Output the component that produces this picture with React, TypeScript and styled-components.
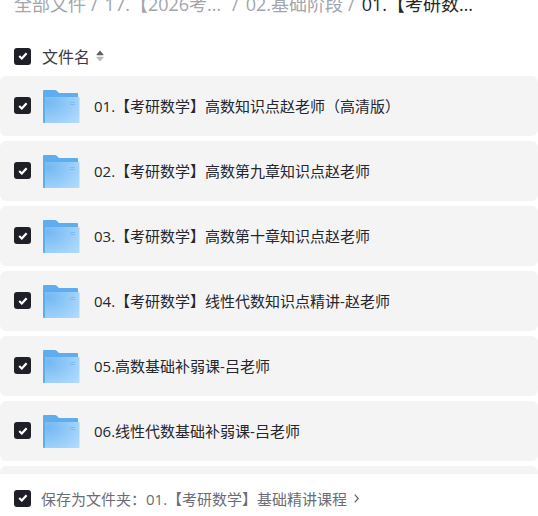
import styled, { createGlobalStyle } from 'styled-components'

const folders = [
  '01.【考研数学】高数知识点赵老师（高清版）',
  '02.【考研数学】高数第九章知识点赵老师',
  '03.【考研数学】高数第十章知识点赵老师',
  '04.【考研数学】线性代数知识点精讲-赵老师',
  '05.高数基础补弱课-吕老师',
  '06.线性代数基础补弱课-吕老师',
  '',
]

const crumbs = [
  { name: '全部文件', truncated: false },
  { name: '17.【2026考…', truncated: true },
  { name: '02.基础阶段', truncated: false },
]

const CheckBox = () => (
  <Check>
    <svg width="10" height="8" viewBox="0 0 10 8">
      <path d="M1.2 4 L3.8 6.5 L8.6 1.2" fill="none" stroke="#fff" strokeWidth="2.2" />
    </svg>
  </Check>
)

const FolderIcon = () => (
  <FolderSvg width="37" height="33" viewBox="0 0 37 33">
    <defs>
      <radialGradient id="folderFront" cx="0.1" cy="0.2" r="1.1">
        <stop offset="0" stopColor="#74b8f2" />
        <stop offset="1" stopColor="#aedafe" />
      </radialGradient>
    </defs>
    <path d="M1 0 H12 Q13.5 0 14.5 1.5 L16 3 H34 Q35 3 35 4 V8 H0 V1 Q0 0 1 0 Z" fill="#5fadec" />
    <path d="M0 4 H3 V33 H1 Q0 33 0 32 Z" fill="#5fadec" />
    <path d="M2 7 H35.5 Q36.5 7 36.5 8 V32 Q36.5 33 35.5 33 H2 Z" fill="url(#folderFront)" />
    <path d="M27 12.5 H32 M27 14.5 H32" stroke="#7fbcf0" strokeWidth="1" />
  </FolderSvg>
)

const SortIcon = () => (
  <SortSvg width="8" height="12" viewBox="0 0 8 12">
    <path d="M4 0.5 L7.5 4.5 Q7.8 5.3 7 5.3 H1 Q0.2 5.3 0.5 4.5 Z" fill="#5e6068" />
    <path d="M4 11.5 L7.5 7.5 Q7.8 6.7 7 6.7 H1 Q0.2 6.7 0.5 7.5 Z" fill="#b9bac0" />
  </SortSvg>
)

export default function App() {
  return (
    <>
      <GlobalStyle />
      <Page>
        <Breadcrumb>
          {crumbs.map((crumb) => (
            <Crumb key={crumb.name}>
              {crumb.name}
              <Slash $truncated={crumb.truncated}>/</Slash>
            </Crumb>
          ))}
          <CurrentCrumb>01.【考研数…</CurrentCrumb>
        </Breadcrumb>
        <Header>
          <CheckBox />
          <HeaderLabel>文件名</HeaderLabel>
          <SortIcon />
        </Header>
        <List>
          {folders.map((name, index) => (
            <Row key={index}>
              <CheckBox />
              <FolderIcon />
              <RowName>{name}</RowName>
            </Row>
          ))}
        </List>
        <Footer>
          <CheckBox />
          <FooterText>保存为文件夹：01.【考研数学】基础精讲课程</FooterText>
          <Chevron viewBox="0 0 5 9" width="5" height="9">
            <path d="M0.7 0.7 L4.2 4.5 L0.7 8.3" fill="none" stroke="#5d6068" strokeWidth="1.2" />
          </Chevron>
        </Footer>
      </Page>
    </>
  )
}

const GlobalStyle = createGlobalStyle`
  html, body {
    margin: 0;
    background: #fff;
  }
`

const Page = styled.div`
  position: relative;
  width: 538px;
  height: 516px;
  overflow: hidden;
  font-family: "Open Sans", "Noto Sans CJK SC", sans-serif;
  color: #25262b;
`

const Breadcrumb = styled.div`
  display: flex;
  align-items: center;
  height: 24px;
  margin-top: -9px;
  padding-left: 14px;
  font-size: 18px;
  white-space: nowrap;
`

const Crumb = styled.span`
  color: #a3a5ad;
`

const Slash = styled.span<{ $truncated: boolean }>`
  margin: 0 7px 0 ${(props) => (props.$truncated ? '11px' : '5px')};
`

const CurrentCrumb = styled.span`
  color: #25262b;
`

const Header = styled.div`
  display: flex;
  align-items: center;
  height: 40px;
  margin-top: 21px;
  padding-left: 14px;
`

const HeaderLabel = styled.span`
  margin-left: 11px;
  font-size: 16px;
  color: #3a3b44;
`

const SortSvg = styled.svg`
  margin-left: 6px;
`

const Check = styled.span`
  display: flex;
  flex: none;
  align-items: center;
  justify-content: center;
  width: 17px;
  height: 17px;
  border-radius: 3px;
  background: #1f2027;
`

const List = styled.div`
  display: flex;
  flex-direction: column;
  gap: 5px;
`

const Row = styled.div`
  display: flex;
  flex: none;
  box-sizing: border-box;
  align-items: center;
  gap: 12px;
  height: 60px;
  padding: 0 0 1px 14px;
  border-radius: 6px;
  background: #f4f4f4;
`

const FolderSvg = styled.svg`
  flex: none;
  margin-top: 2px;
`

const RowName = styled.span`
  margin-left: 2px;
  font-size: 15px;
  color: #25262e;
`

const Footer = styled.div`
  position: absolute;
  left: 0;
  right: 0;
  bottom: 0;
  display: flex;
  align-items: center;
  height: 36px;
  padding: 6px 0 0 14px;
  background: #fff;
`

const FooterText = styled.span`
  margin-left: 10px;
  font-size: 15px;
  color: #6b6d76;
`

const Chevron = styled.svg`
  margin-left: 7px;
`
